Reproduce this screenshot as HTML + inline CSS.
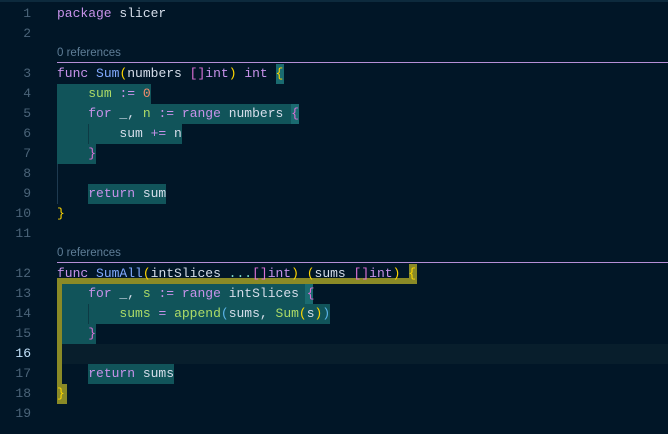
<!DOCTYPE html>
<html><head><style>
body{margin:0;background:#011627;width:668px;height:434px;overflow:hidden;position:relative;font-family:"Liberation Mono",monospace;font-size:13px;color:#d6deeb}
.ln{position:absolute;left:0;width:31px;text-align:right;color:#4b6479;height:20px;line-height:20px}
.c{position:absolute;left:57px;height:20px;line-height:20px;white-space:pre}
.b{position:absolute;background:#11545a}
.bb{position:absolute;background:#1a6b70}
.y{position:absolute;background:#8a8a26}
.lens{position:absolute;left:57px;font-family:"Liberation Sans",sans-serif;font-size:11.5px;color:#5f7e97;height:20px;line-height:20px}
.sep{position:absolute;left:57px;right:0;height:1px;background:#b58fd6}
.k{color:#c792ea}.f{color:#82aaff}.g{color:#addb67}.o{color:#f78c6c}.p{color:#ffd700}.m{color:#da70d6}.cy{color:#7fdbca}.lb{color:#5ab4e8}
</style></head><body>
<div style="position:absolute;left:0;right:0;top:0;height:2px;background:#0d2a3d"></div>
<div style="position:absolute;left:62px;right:0;top:344px;height:20px;background:#081e2c"></div>
<div class="bb" style="left:276px;top:64px;width:8px;height:20px"></div>
<div class="b" style="left:57px;top:84px;width:94px;height:20px"></div>
<div class="b" style="left:57px;top:104px;width:234px;height:20px"></div>
<div class="bb" style="left:291px;top:104px;width:8px;height:20px"></div>
<div class="b" style="left:57px;top:124px;width:125px;height:20px"></div>
<div class="b" style="left:57px;top:144px;width:39px;height:20px"></div>
<div class="b" style="left:88px;top:184px;width:78px;height:20px"></div>
<div style="position:absolute;left:88px;top:124px;width:1px;height:20px;background:#0d3a44"></div>
<div style="position:absolute;left:57px;top:164px;width:1px;height:40px;background:#1e3a50"></div>
<div class="y" style="left:57px;top:278px;width:360px;height:6px"></div>
<div class="y" style="left:409px;top:264px;width:8px;height:20px"></div>
<div class="y" style="left:57px;top:284px;width:5px;height:100px"></div>
<div class="y" style="left:57px;top:384px;width:10px;height:20px"></div>
<div class="b" style="left:62px;top:284px;width:243px;height:20px"></div>
<div class="bb" style="left:305px;top:284px;width:8px;height:20px"></div>
<div class="b" style="left:62px;top:304px;width:268px;height:20px"></div>
<div class="b" style="left:62px;top:324px;width:34px;height:20px"></div>
<div class="b" style="left:88px;top:364px;width:86px;height:20px"></div>
<div style="position:absolute;left:88px;top:304px;width:1px;height:20px;background:#0d3a44"></div>

<div class="ln" style="top:4px">1</div><div class="c" style="top:4px"><span class="k">package</span> slicer</div>
<div class="ln" style="top:24px">2</div>
<div class="lens" style="top:43px">0 references</div><div class="sep" style="top:62px"></div>
<div class="ln" style="top:64px">3</div><div class="c" style="top:64px"><span class="k">func</span> <span class="f">Sum</span><span class="p">(</span>numbers <span class="m">[]</span><span class="k">int</span><span class="p">)</span> <span class="k">int</span> <span class="p">{</span></div>
<div class="ln" style="top:84px">4</div><div class="c" style="top:84px">    <span class="g">sum</span> <span class="k">:=</span> <span class="o">0</span></div>
<div class="ln" style="top:104px">5</div><div class="c" style="top:104px">    <span class="k">for</span> _, <span class="g">n</span> <span class="k">:=</span> <span class="k">range</span> numbers <span class="m">{</span></div>
<div class="ln" style="top:124px">6</div><div class="c" style="top:124px">        sum <span class="k">+=</span> n</div>
<div class="ln" style="top:144px">7</div><div class="c" style="top:144px">    <span class="m">}</span></div>
<div class="ln" style="top:164px">8</div>
<div class="ln" style="top:184px">9</div><div class="c" style="top:184px">    <span class="k">return</span> sum</div>
<div class="ln" style="top:204px">10</div><div class="c" style="top:204px"><span class="p">}</span></div>
<div class="ln" style="top:224px">11</div>
<div class="lens" style="top:243px">0 references</div><div class="sep" style="top:262px"></div>
<div class="ln" style="top:264px">12</div><div class="c" style="top:264px"><span class="k">func</span> <span class="f">SumAll</span><span class="p">(</span>intSlices <span class="cy">...</span><span class="m">[]</span><span class="k">int</span><span class="p">)</span> <span class="p">(</span>sums <span class="m">[]</span><span class="k">int</span><span class="p">)</span> <span class="p">{</span></div>
<div class="ln" style="top:284px">13</div><div class="c" style="top:284px">    <span class="k">for</span> _, <span class="g">s</span> <span class="k">:=</span> <span class="k">range</span> intSlices <span class="m">{</span></div>
<div class="ln" style="top:304px">14</div><div class="c" style="top:304px">        <span class="g">sums</span> <span class="k">=</span> <span class="g">append</span><span class="lb">(</span>sums, <span class="g">Sum</span><span class="p">(</span>s<span class="p">)</span><span class="lb">)</span></div>
<div class="ln" style="top:324px">15</div><div class="c" style="top:324px">    <span class="m">}</span></div>
<div class="ln" style="top:344px;color:#c5e4fd">16</div>
<div class="ln" style="top:364px">17</div><div class="c" style="top:364px">    <span class="k">return</span> sums</div>
<div class="ln" style="top:384px">18</div><div class="c" style="top:384px"><span class="p">}</span></div>
<div class="ln" style="top:404px">19</div>
</body></html>
